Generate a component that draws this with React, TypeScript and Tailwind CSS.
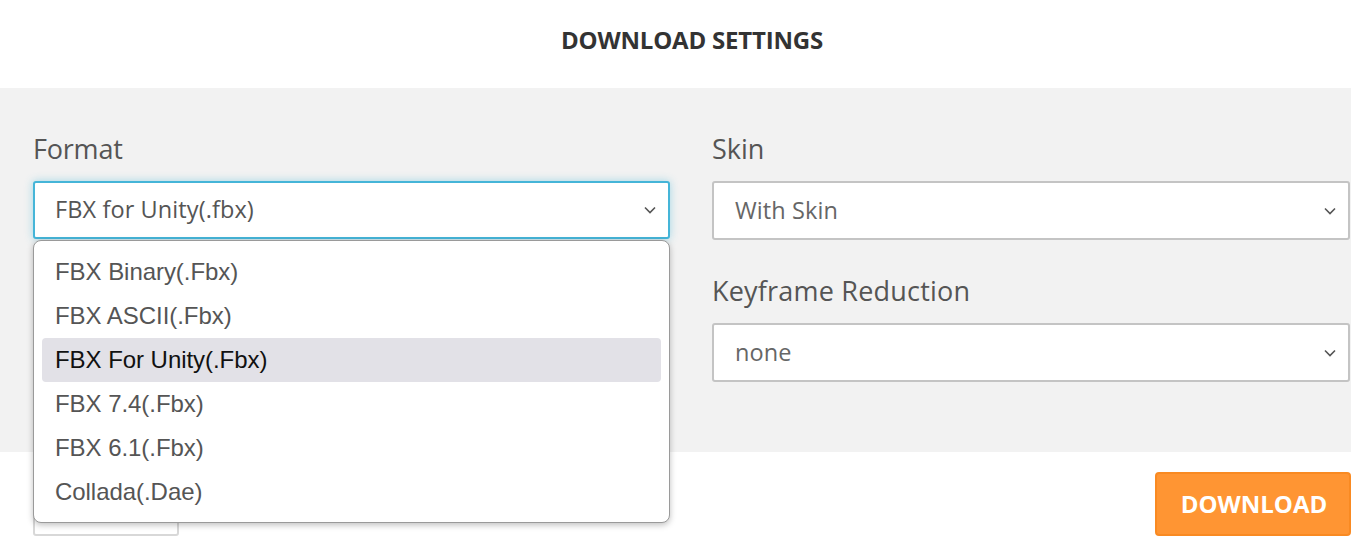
import React from "react";

const Chevron = () => (
  <svg width="12" height="8" viewBox="0 0 12 8" className="shrink-0">
    <path d="M1 1.5 L6 6.5 L11 1.5" fill="none" stroke="#555" strokeWidth="1.6" />
  </svg>
);

const options = [
  "FBX Binary(.Fbx)",
  "FBX ASCII(.Fbx)",
  "FBX For Unity(.Fbx)",
  "FBX 7.4(.Fbx)",
  "FBX 6.1(.Fbx)",
  "Collada(.Dae)",
];

export default function App() {
  return (
    <div className="w-[1351px] h-[541px] overflow-hidden bg-white" style={{ fontFamily: '"Open Sans", sans-serif' }}>
      <div className="h-[88px] flex items-center justify-center pl-[33px]">
        <h1 className="text-[24px] font-bold text-[#333] tracking-[-0.2px] pb-[8px]">DOWNLOAD SETTINGS</h1>
      </div>
      <div className="bg-[#f2f2f2] h-[364px] pl-[33px] pt-[45px]">
        <div className="flex gap-[42px]">
          <div className="w-[637px] flex flex-col relative">
            <label className="text-[27px] text-[#555] leading-[32px] h-[32px] tracking-[-0.2px]">Format</label>
            <div className="mt-[16px] h-[58px] bg-white border-2 border-[#45b5d8] rounded-[3px] shadow-[0_0_8px_rgba(69,181,216,0.45)] flex items-center justify-between pl-[20px] pr-[12px]">
              <span className="text-[23.5px] text-[#555] tracking-[0.1px]">FBX for Unity(.fbx)</span>
              <Chevron />
            </div>
            <div
              className="absolute left-0 top-[107px] w-[637px] h-[283px] bg-white border border-[#9a9a9a] rounded-[8px] shadow-[0_2px_6px_rgba(0,0,0,0.25)] z-10 px-[8px] pt-[9px]"
              style={{ fontFamily: '"Liberation Sans", Arial, sans-serif' }}
            >
              {options.map((o, i) => (
                <div
                  key={o}
                  className={
                    "h-[44px] flex items-center pl-[13px] text-[24px] tracking-[-0.05px] rounded-[4px] " +
                    (i === 2 ? "bg-[#e2e1e7] text-[#111]" : "text-[#555]")
                  }
                >
                  {o}
                </div>
              ))}
            </div>
          </div>
          <div className="w-[638px] flex flex-col">
            <label className="text-[27px] text-[#555] leading-[32px] h-[32px] tracking-[0px]">Skin</label>
            <div className="mt-[16px] h-[59px] bg-white border-2 border-[#c4c4c4] rounded-[3px] flex items-center justify-between pl-[21px] pr-[12px]">
              <span className="text-[23.5px] text-[#666] tracking-[0.1px]">With Skin</span>
              <Chevron />
            </div>
            <label className="mt-[35px] text-[27px] text-[#555] leading-[32px] h-[32px] tracking-[0.2px]">Keyframe Reduction</label>
            <div className="mt-[16px] h-[59px] bg-white border-2 border-[#c4c4c4] rounded-[3px] flex items-center justify-between pl-[21px] pr-[12px]">
              <span className="text-[23.5px] text-[#666] tracking-[0.1px]">none</span>
              <Chevron />
            </div>
          </div>
        </div>
      </div>
      <div className="flex justify-between pl-[33px] pt-[20px]">
        <div className="w-[146px] h-[64px] bg-white border-2 border-[#d8d8d8] rounded-[3px]" />
        <button className="w-[196px] h-[64px] bg-[#ff9533] border-2 border-[#f98a22] rounded-[4px] text-white text-[24px] font-bold flex items-center justify-center pl-[2px]">
          DOWNLOAD
        </button>
      </div>
    </div>
  );
}
